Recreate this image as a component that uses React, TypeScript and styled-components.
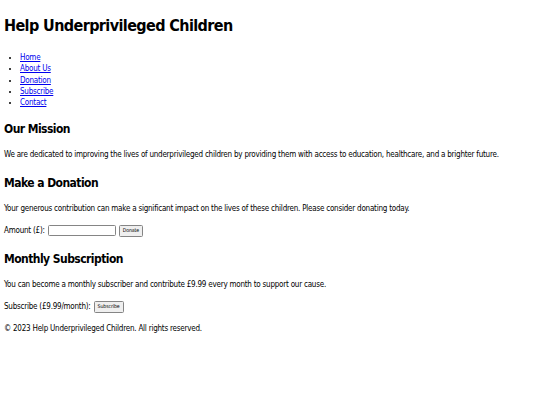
import React from 'react';
import styled, { createGlobalStyle } from 'styled-components';

const GlobalStyle = createGlobalStyle`
  html, body {
    margin: 0;
    padding: 0;
    background: #ffffff;
  }
  body {
    padding: 4px;
    font-family: "DejaVu Sans Condensed", sans-serif;
    font-size: 8px;
    letter-spacing: -0.23px;
    line-height: 11.3px;
    color: #000;
  }
`;

const Header = styled.header``;

const Title = styled.h1`
  font-size: 16px;
  letter-spacing: -0.6px;
  line-height: normal;
  font-weight: bold;
  margin: 12.2px 0 17px;
`;

const NavList = styled.ul`
  margin: 0;
  padding-left: 16px;
  list-style: disc;
`;

const NavItem = styled.li`
  line-height: 11.3px;
`;

const NavLink = styled.a`
  color: #0000ee;
  text-decoration: underline;
`;

const SectionTitle = styled.h2`
  font-size: 12px;
  letter-spacing: -0.55px;
  line-height: normal;
  font-weight: bold;
  margin: 15.1px 0 13.6px;
`;

const Section = styled.section`
  &:first-of-type ${SectionTitle} {
    margin-top: 13.1px;
  }
`;

const Text = styled.p`
  margin: 10px 0;
`;

const Form = styled.form`
  display: flex;
  align-items: center;
  gap: 3px;
  height: 12px;
  margin: 10px 0 9px;
`;

const Label = styled.label``;

const Input = styled.input`
  box-sizing: border-box;
  width: 68px;
  height: 11px;
  padding: 0 2px;
  border: 1px solid #858585;
  border-radius: 1.5px;
  font-size: 6px;
`;

const Button = styled.button`
  box-sizing: border-box;
  height: 12px;
  font-family: "DejaVu Sans Condensed", sans-serif;
  font-size: 5.2px;
  letter-spacing: -0.1px;
  line-height: 1;
  padding: 0 3px;
  background: #efefef;
  border: 1px solid #858585;
  border-radius: 1.5px;
  color: #000;
`;

const Footer = styled.footer`
  margin-top: 10.5px;
`;

const navItems = ['Home', 'About Us', 'Donation', 'Subscribe', 'Contact'];

export default function App() {
  return (
    <>
      <GlobalStyle />
      <Header>
        <Title>Help Underprivileged Children</Title>
        <nav>
          <NavList>
            {navItems.map((item) => (
              <NavItem key={item}>
                <NavLink href="#">{item}</NavLink>
              </NavItem>
            ))}
          </NavList>
        </nav>
      </Header>
      <main>
        <Section>
          <SectionTitle>Our Mission</SectionTitle>
          <Text>
            We are dedicated to improving the lives of underprivileged children by providing them with access to education, healthcare, and a brighter future.
          </Text>
        </Section>
        <Section>
          <SectionTitle>Make a Donation</SectionTitle>
          <Text>
            Your generous contribution can make a significant impact on the lives of these children. Please consider donating today.
          </Text>
          <Form onSubmit={(e) => e.preventDefault()}>
            <Label htmlFor="amount">Amount (£):</Label>
            <Input id="amount" type="text" />
            <Button type="submit">Donate</Button>
          </Form>
        </Section>
        <Section>
          <SectionTitle>Monthly Subscription</SectionTitle>
          <Text>
            You can become a monthly subscriber and contribute £9.99 every month to support our cause.
          </Text>
          <Form onSubmit={(e) => e.preventDefault()}>
            <Label>Subscribe (£9.99/month):</Label>
            <Button type="submit">Subscribe</Button>
          </Form>
        </Section>
      </main>
      <Footer>© 2023 Help Underprivileged Children. All rights reserved.</Footer>
    </>
  );
}
